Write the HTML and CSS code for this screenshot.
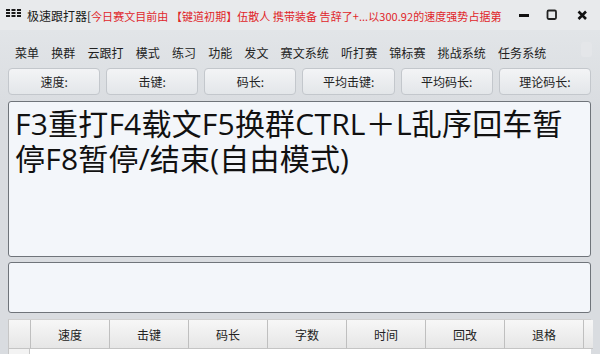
FILE: index.html
```html
<!DOCTYPE html>
<html lang="zh-CN">
<head>
<meta charset="utf-8">
<title>极速跟打器</title>
<link rel="stylesheet" href="styles.css">
</head>
<body>
<div class="window">
  <div class="titlebar">
    <svg class="app-icon" width="16" height="9" viewBox="0 0 16 9">
      <rect x="0" y="0" width="4" height="2"/><rect x="5.5" y="0" width="4" height="2"/><rect x="11" y="0" width="4" height="2"/>
      <rect x="0" y="3" width="4" height="2"/><rect x="5.5" y="3" width="4" height="2"/><rect x="11" y="3" width="4" height="2"/>
      <rect x="0" y="6" width="4" height="2"/><rect x="5.5" y="6" width="4" height="2"/><rect x="11" y="6" width="4" height="2"/>
    </svg>
    <div class="title"><span class="app-name">极速跟打器[</span><span class="notice">今日赛文目前由 【键道初期】伍散人 携带装备 告辞了+...以300.92的速度强势占据第</span></div>
    <div class="controls">
      <svg class="ctl" width="28" height="20" viewBox="0 0 28 20"><rect x="8" y="9" width="10" height="3" fill="#111"/></svg>
      <svg class="ctl" width="28" height="20" viewBox="0 0 28 20"><rect x="8.5" y="5.5" width="8.5" height="8.5" rx="1.2" fill="none" stroke="#222" stroke-width="1.8"/></svg>
      <svg class="ctl" width="28" height="20" viewBox="0 0 28 20"><path d="M11.5 6.5 L19 14 M19 6.5 L11.5 14" stroke="#111" stroke-width="2.6"/></svg>
    </div>
  </div>
  <div class="body">
    <div class="menu">
      <span class="menu-item">菜单</span>
      <span class="menu-item">换群</span>
      <span class="menu-item">云跟打</span>
      <span class="menu-item">模式</span>
      <span class="menu-item">练习</span>
      <span class="menu-item">功能</span>
      <span class="menu-item">发文</span>
      <span class="menu-item">赛文系统</span>
      <span class="menu-item">听打赛</span>
      <span class="menu-item">锦标赛</span>
      <span class="menu-item">挑战系统</span>
      <span class="menu-item">任务系统</span>
      <span class="menu-stub"></span>
    </div>
    <div class="stats">
      <div class="stat-btn">速度:</div>
      <div class="stat-btn">击键:</div>
      <div class="stat-btn">码长:</div>
      <div class="stat-btn">平均击键:</div>
      <div class="stat-btn">平均码长:</div>
      <div class="stat-btn">理论码长:</div>
    </div>
    <div class="display">F3重打F4载文F5换群CTRL＋L乱序回车暂停F8暂停/结束(自由模式)</div>
    <div class="input"></div>
    <div class="grid">
      <div class="grid-head">
        <div class="cell corner"></div>
        <div class="cell">速度</div>
        <div class="cell">击键</div>
        <div class="cell">码长</div>
        <div class="cell">字数</div>
        <div class="cell">时间</div>
        <div class="cell">回改</div>
        <div class="cell">退格</div>
        <div class="cell tail"></div>
      </div>
      <div class="grid-row">
        <div class="row-head"></div>
        <div class="row-body"></div>
      </div>
    </div>
  </div>
</div>
</body>
</html>
```

FILE: styles.css
```css
* { box-sizing: border-box; }
html, body { margin: 0; padding: 0; }
body {
  width: 600px;
  height: 354px;
  overflow: hidden;
  font-family: "Noto Sans CJK SC", "Noto Sans", sans-serif;
  color: #1e1e1e;
}
.window {
  width: 600px;
  height: 354px;
  background: #dcdfe3;
  display: flex;
  flex-direction: column;
  overflow: hidden;
}
.titlebar {
  height: 30px;
  flex: none;
  display: flex;
  align-items: center;
  background: #e8eaec;
  padding-left: 6px;
}
.app-icon { fill: #1a1a1a; flex: none; margin-right: 5px; margin-top: -4px; }
.title {
  width: 484px;
  white-space: nowrap;
  line-height: 30px;
  flex: none;
}
.app-name { font-size: 12px; color: #1a1a1a; }
.notice { font-size: 11px; color: #e0262a; letter-spacing: 0.05px; }
.controls { display: flex; }
.ctl { display: block; }
.body {
  flex: 1;
  padding: 0 9px 0 8px;
  border-left: 2px solid #cdd1d5;
  margin-left: -2px;
  background: linear-gradient(#e2e5e8, #d9dce0 80px);
  display: flex;
  flex-direction: column;
}
.menu {
  margin-top: 12px;
  height: 20px;
  display: flex;
  align-items: center;
  font-size: 12px;
  color: #222;
}
.menu-item { padding: 0 6px; white-space: nowrap; letter-spacing: 0.1px; }
.menu-item:first-child { padding-left: 7px; }
.menu-stub {
  margin-left: auto;
  width: 11px;
  height: 15px;
  border-radius: 3px;
  background: #e4e6e9;
  margin-right: -1px;
  margin-top: -6px;
}
.stats {
  margin-top: 6px;
  display: grid;
  grid-template-columns: repeat(6, 1fr);
  gap: 6px;
  height: 27px;
}
.stat-btn {
  border: 1px solid #c3c7cc;
  border-radius: 4px;
  background: linear-gradient(#f3f4f6, #e3e6e9);
  font-size: 12px;
  display: flex;
  align-items: center;
  justify-content: center;
  color: #222;
}
.display {
  margin-top: 6px;
  height: 156px;
  border: 1px solid #6f747a;
  border-radius: 3px;
  background: #f3f6fa;
  font-family: "Open Sans", "Noto Sans CJK SC", sans-serif;
  font-size: 30px;
  line-height: 35px;
  padding: 4px 6px;
  color: #111;
  word-break: break-all;
  letter-spacing: 0.2px;
}
.input {
  margin-top: 5px;
  height: 51px;
  border: 1px solid #6f747a;
  border-radius: 3px;
  background: #f3f6fa;
}
.grid {
  margin-top: 6px;
  display: flex;
  flex-direction: column;
  background: #fff;
}
.grid-head {
  display: flex;
  height: 30px;
  border-top: 1px solid #d0d0d0;
  border-left: 1px solid #c6c6c6;
}
.cell {
  width: 79px;
  flex: none;
  border-right: 1px solid #bfbfbf;
  border-bottom: 1px solid #c4c4c4;
  background: linear-gradient(#f7f7f7, #e6e6e6);
  font-size: 12px;
  display: flex;
  align-items: center;
  justify-content: center;
  color: #222;
}
.cell.corner { width: 22px; }
.cell.tail { width: 9px; border-right: none; }
.grid-row { display: flex; height: 6px; }
.row-head { width: 22px; border-right: 1px solid #c8c8c8; border-left: 1px solid #c6c6c6; background: #f3f3f3; }
.row-body { flex: 1; background: #fff; }
```
